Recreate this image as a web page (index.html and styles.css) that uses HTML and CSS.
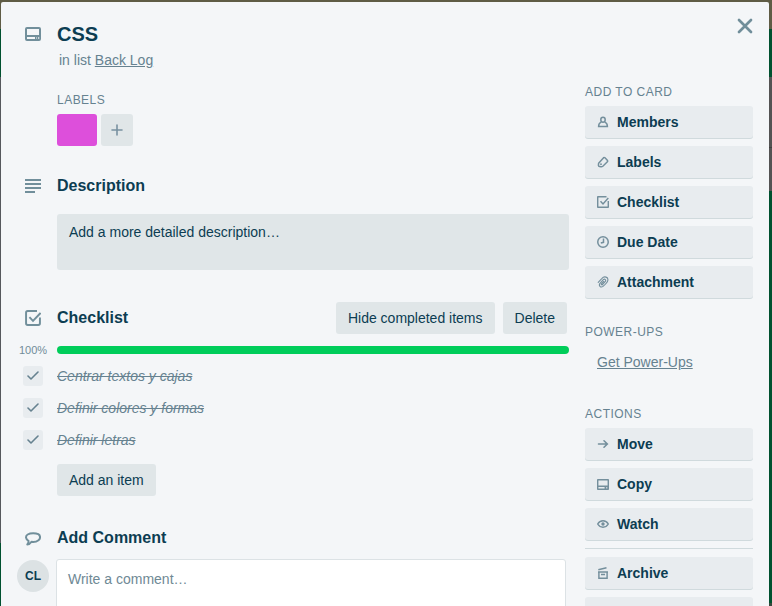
FILE: index.html
```html
<!DOCTYPE html>
<html lang="en">
<head>
<meta charset="utf-8">
<title>CSS</title>
<link rel="stylesheet" href="styles.css">
</head>
<body>
<svg class="sprite" aria-hidden="true">
  <symbol id="check-box" viewBox="0 0 18 18"><path d="M13.500 1.200H3Q1.200 1.200 1.200 3v12q0 1.800 1.800 1.800h12q1.800 0 1.800-1.800V8.500M5 8l4 4.300 8.500-9" fill="none" stroke="currentColor" stroke-width="2.200"/></symbol>
  <symbol id="tick" viewBox="0 0 12 10"><path d="M1 5l3 3 7-7" fill="none" stroke="currentColor" stroke-width="1.600" stroke-linecap="round" stroke-linejoin="round"/></symbol>
</svg>
<div class="modal">
  <button class="close" aria-label="Close"><svg width="16" height="16" viewBox="0 0 16 16"><path d="M2 2l12 12M14 2L2 14" fill="none" stroke="currentColor" stroke-width="2.700" stroke-linecap="round"/></svg></button>
  <header class="header">
    <svg class="icon" width="16" height="14" viewBox="0 0 16 14"><path fill-rule="evenodd" d="M2 0h12a2 2 0 0 1 2 2v10a2 2 0 0 1-2 2H2a2 2 0 0 1-2-2V2a2 2 0 0 1 2-2zm0 2v6h12V2zm0 8v2h8v-2zm9.500 0v2H12v-2zm1.800 0v2h.9v-2z"/></svg>
    <h1>CSS</h1>
    <p class="list-name">in list <a>Back Log</a></p>
  </header>
  <div class="columns">
    <main>
      <section class="labels">
        <h3>LABELS</h3>
        <div class="label-row">
          <span class="label"></span>
          <span class="label-add"><svg width="12" height="12" viewBox="0 0 12 12"><path d="M6 1v10M1 6h10" stroke="currentColor" stroke-width="1.600" stroke-linecap="round"/></svg></span>
        </div>
      </section>
      <section class="description">
        <div class="heading"><svg class="icon" width="16" height="14" viewBox="0 0 16 14"><path d="M0 1h16M0 5h16M0 9h16M0 13h10" stroke="currentColor" stroke-width="2"/></svg><h2>Description</h2></div>
        <div class="description-box">Add a more detailed description…</div>
      </section>
      <section class="checklist">
        <div class="heading"><svg class="icon" width="16" height="16"><use href="#check-box"/></svg><h2>Checklist</h2>
          <div class="heading-actions"><button class="btn">Hide completed items</button><button class="btn">Delete</button></div>
        </div>
        <div class="progress"><span>100%</span><div class="bar"></div></div>
        <ul>
          <li><i><svg width="12" height="10"><use href="#tick"/></svg></i><s>Centrar textos y cajas</s></li>
          <li><i><svg width="12" height="10"><use href="#tick"/></svg></i><s>Definir colores y formas</s></li>
          <li><i><svg width="12" height="10"><use href="#tick"/></svg></i><s>Definir letras</s></li>
        </ul>
        <button class="btn add-item">Add an item</button>
      </section>
      <section class="comment">
        <div class="heading"><svg class="icon" width="16" height="14" viewBox="0 0 16 14"><path d="M3.500 8.800C.5 7.500.2 4 2.700 2.500c3-1.800 8-1.600 10.600-.3 2.400 1.500 2.200 4.400.2 6C11.500 9.800 8 10 6.500 9.800 5.500 11.300 4 12.500 2.300 12.500c.9-1 1.300-2.300 1.200-3.700z" fill="none" stroke="currentColor" stroke-width="2" stroke-linejoin="round"/></svg><h2>Add Comment</h2></div>
        <div class="comment-row"><span class="avatar">CL</span><div class="comment-box">Write a comment…</div></div>
      </section>
    </main>
    <aside>
      <section class="group">
        <h3>ADD TO CARD</h3>
        <a class="side-btn"><svg width="12" height="12" viewBox="0 0 12 12"><g fill="none" stroke="currentColor" stroke-width="1.500"><ellipse cx="6" cy="3.700" rx="2.200" ry="2.500"/><path d="M4.300 6.100C2.500 6.600 1.600 7.800 1.600 10.500h8.800C10.400 7.800 9.500 6.600 7.700 6.100"/></g></svg>Members</a>
        <a class="side-btn"><svg width="12" height="12" viewBox="0 0 12 12"><path d="M1.600 7.200 6.600 1.700Q7.300 1.200 8 1.800L10.500 4.400Q11 5.100 10.400 5.700L5.800 10.200Q5 10.900 4 10.800L2.600 10.600Q1.600 10.300 1.400 9.300z" fill="none" stroke="currentColor" stroke-width="1.500" stroke-linejoin="round"/><circle cx="4" cy="8.200" r=".9"/></svg>Labels</a>
        <a class="side-btn"><svg width="12" height="12" viewBox="0 0 12 12"><path d="M9.500.7H1.200Q.7.700.7 1.200v9.600q0 .5.500.5h9.600q.5 0 .5-.5V5M3.500 5.300 6 8l5.300-6" fill="none" stroke="currentColor" stroke-width="1.450"/></svg>Checklist</a>
        <a class="side-btn"><svg width="12" height="12" viewBox="0 0 12 12"><g fill="none" stroke="currentColor" stroke-width="1.500"><circle cx="6" cy="6" r="5.250"/><path d="M6.500 2.500v3.800L3.800 7"/></g></svg>Due Date</a>
        <a class="side-btn"><svg width="12" height="12" viewBox="0 0 12 12"><path d="M1.200 6.300 5 2.300C7-.1 11.900.7 10.700 4.900 10.300 6.200 7.400 9.200 6 10.400 3.700 12 1.300 9.500 3 7.300L6.300 3.700C7.800 2.400 9.300 4 8.300 5.400L5.500 8.500C4.700 9.300 3.900 8.500 4.600 7.700L6.700 5.400" fill="none" stroke="currentColor" stroke-width="1.100" stroke-linecap="round"/></svg>Attachment</a>
      </section>
      <section class="group power-ups">
        <h3>POWER-UPS</h3>
        <a class="quiet-link">Get Power-Ups</a>
      </section>
      <section class="group actions">
        <h3>ACTIONS</h3>
        <a class="side-btn"><svg width="12" height="12" viewBox="0 0 12 12"><path d="M1.500 6h9M7 2.800 10.300 6 7 9.200" fill="none" stroke="currentColor" stroke-width="1.600" stroke-linecap="round"/></svg>Move</a>
        <a class="side-btn"><svg width="12" height="11" viewBox="0 0 12 11"><path d="M1.200.7h9.600q.5 0 .5.500v8.600q0 .5-.5.500H1.200q-.5 0-.5-.5V1.200q0-.5.500-.5zM1 7.300h10M8.300 7v3" fill="none" stroke="currentColor" stroke-width="1.450"/><path d="M9.500 8h2v2h-2z" opacity=".6"/></svg>Copy</a>
        <a class="side-btn"><svg width="12" height="12" viewBox="0 0 12 12"><path d="M.7 6C2 3.700 3.700 2.800 6 2.800S10 3.700 11.300 6C10 8.300 8.300 9.200 6 9.200S2 8.300.7 6z" fill="none" stroke="currentColor" stroke-width="1.450"/><circle cx="6" cy="6" r="1.700"/></svg>Watch</a>
        <hr>
        <a class="side-btn"><svg width="12" height="12" viewBox="0 0 12 12"><g fill="none" stroke="currentColor" stroke-width="1.450"><path d="M1.300 2.800 9.500.8M1 4.900h10M1.900 5v6.300h8.200V5M4 7.500h4"/></g></svg>Archive</a>
        <a class="side-btn"></a>
      </section>
    </aside>
  </div>
</div>
</body>
</html>
```

FILE: styles.css
```css
* { box-sizing: border-box; }
html { height: 100%; overflow: hidden; }
body {
  height: 606px;
  margin: 0;
  padding: 2px 3px 0 1px;
  overflow: hidden;
  background:
    linear-gradient(#5f5c45 0 29px, #00512f 29px 77px, #55585c 77px 543px, #00512f 543px) left / 10px 100% no-repeat,
    linear-gradient(#5f5c45 0 29px, #00512f 29px 77px, #535353 77px 147px, #404040 147px 148px, #535353 148px 191px, #00512f 191px 603px, #35493d 603px) right / 10px 100% no-repeat,
    #5f5c45;
  color: #0c3d52;
  font: 14px/20px "Liberation Sans", Arial, sans-serif;
}
h1, h2, h3, p, ul { margin: 0; padding: 0; }
h1 { font-size: 20px; line-height: 24px; }
h2 { font-size: 16px; line-height: 20px; }
h3 { font-size: 12px; line-height: 16px; font-weight: 400; letter-spacing: .48px; color: #668290; }
svg { flex: none; fill: currentColor; }
.sprite { position: absolute; width: 0; height: 0; }
.modal {
  position: relative;
  height: 620px;
  overflow: hidden;
  border-radius: 2px;
  background: #f4f6f8;
}
.close {
  position: absolute;
  top: 16px;
  right: 16px;
  width: 16px;
  height: 16px;
  padding: 0;
  border: 0;
  background: none;
  color: #708e9a;
}
.close svg { display: block; }
.icon { color: #718f9b; }
.header {
  display: grid;
  grid-template-columns: 32px 1fr;
  height: 81px;
  padding: 20px 24px 0;
  align-content: start;
}
.header .icon { margin-top: 5px; }
.list-name { grid-column: 2; margin: 4px 0 0 2px; color: #668290; }
.list-name a, .quiet-link { text-decoration: underline; }
.columns {
  display: grid;
  grid-template-columns: 552px 168px;
  gap: 16px;
  padding: 0 16px;
}
.labels { height: 92px; padding: 9px 0 0 40px; }
.label-row { display: flex; gap: 4px; margin-top: 6px; }
.label { width: 40px; height: 32px; border-radius: 3px; background: #dd4fdb; }
.label-add {
  display: flex;
  align-items: center;
  justify-content: center;
  width: 32px;
  height: 32px;
  border-radius: 3px;
  background: #e0e6e8;
  color: #7891a0;
}
.heading { display: flex; align-items: center; height: 32px; padding-left: 8px; }
.heading h2 { margin-left: 16px; }
.description { height: 127px; }
.description .heading { height: 22px; }
.description-box {
  height: 56px;
  margin: 17px 0 0 40px;
  padding: 8px 12px;
  border-radius: 3px;
  background: #e0e6e8;
}
.checklist .heading-actions { display: flex; gap: 8px; margin: 0 2px 0 auto; }
.btn {
  height: 32px;
  padding: 0 12px;
  border: 0;
  border-radius: 3px;
  background: #e0e6e8;
  color: inherit;
  font: inherit;
}
.progress { display: flex; align-items: center; height: 16px; margin-top: 8px; }
.progress span { width: 32px; text-align: center; color: #718c99; font-size: 11px; line-height: 12px; }
.bar { flex: 1; height: 8px; margin-left: 8px; border-radius: 4px; background: #00cd5a; }
ul { margin-top: 2px; list-style: none; }
li { display: flex; align-items: center; height: 32px; padding-left: 6px; color: #668290; font-style: italic; }
li i {
  display: flex;
  align-items: center;
  justify-content: center;
  width: 20px;
  height: 20px;
  margin-right: 14px;
  border-radius: 3px;
  background: #e8ecef;
}
.add-item { display: block; margin: 8px 0 0 40px; }
.comment { margin-top: 26px; }
.comment-row { display: flex; align-items: flex-start; margin-top: 5px; }
.comment .icon { margin-top: 2px; }
.avatar {
  width: 32px;
  height: 32px;
  margin-top: 1px;
  border-radius: 50%;
  background: #dce2e4;
  font-size: 12px;
  font-weight: 700;
  line-height: 32px;
  text-align: center;
}
.comment-box {
  width: 510px;
  height: 70px;
  margin-left: 7px;
  padding: 9px 11px;
  border: 1px solid #dce2e5;
  border-radius: 3px;
  background: #fff;
  color: #6f8995;
}
aside { padding-top: 1px; }
.side-btn {
  display: flex;
  align-items: center;
  height: 32px;
  margin-bottom: 8px;
  padding-left: 12px;
  border-radius: 3px;
  background: #e8ecef;
  box-shadow: 0 1px 0 #d0dadd;
  font-weight: 700;
}
.side-btn svg { margin-right: 8px; color: #748f9c; }
.group { height: 240px; }
.group h3 { margin-bottom: 6px; }
.power-ups { height: 82px; }
.power-ups h3 { margin-bottom: 12px; }
.quiet-link { margin-left: 12px; color: #668290; }
hr { height: 1px; margin: 0 0 8px; border: 0; background: #d0dadd; }
```
